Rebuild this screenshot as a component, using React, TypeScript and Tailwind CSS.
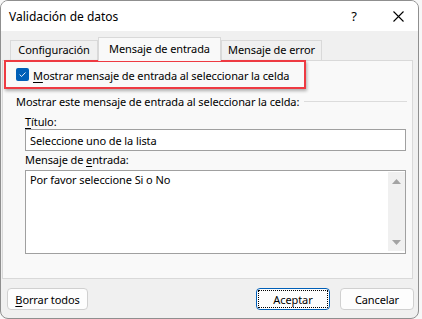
const font = { fontFamily: '"Noto Sans", "Segoe UI", sans-serif' };

function U({ c }: { c: string }) {
  return <span className="underline decoration-1 underline-offset-[2px]">{c}</span>;
}

function Tab({ label, w, active }: { label: string; w: string; active?: boolean }) {
  if (active) {
    return (
      <div
        className={`relative z-10 -mb-px h-[24px] border border-b-0 border-[#d9d9d9] bg-[#f9f9f9] pt-[3px] text-center ${w}`}
      >
        {label}
      </div>
    );
  }
  return (
    <div className={`h-[20px] border border-b-0 border-[#d9d9d9] bg-[#f0f0f0] pt-[1px] text-center ${w}`}>
      {label}
    </div>
  );
}

function Btn({ children, primary, w }: { children: React.ReactNode; primary?: boolean; w: string }) {
  return (
    <div
      className={`relative flex h-[22px] items-center justify-center rounded-[4px] border bg-[#fdfdfd] ${w} ${
        primary ? 'border-[#005fb8]' : 'border-[#d0d0d0]'
      }`}
    >
      {primary && <div className="absolute inset-[1px] border border-dotted border-black" />}
      <span>{children}</span>
    </div>
  );
}

export default function App() {
  return (
    <div
      className="h-[319px] w-[422px] bg-[#f7f7f7] text-[11px] leading-[15px] tracking-[-0.1px] text-black"
      style={font}
    >
      <div className="flex h-[319px] w-[419px] flex-col overflow-hidden rounded-[8px] border border-[#8f8f8f] bg-[#f0f0f0]">
        {/* title bar */}
        <div className="flex h-[30px] shrink-0 items-center bg-white pl-[8px]">
          <span className="text-[12px] tracking-normal">Validación de datos</span>
          <span className="ml-auto mr-[36px] text-[13px] tracking-normal">?</span>
          <svg className="mr-[14px]" width="11" height="11" viewBox="0 0 11 11">
            <path d="M0.5 0.5 L10.5 10.5 M10.5 0.5 L0.5 10.5" stroke="black" strokeWidth="1.1" fill="none" />
          </svg>
        </div>

        {/* tabs */}
        <div className="flex h-[29px] shrink-0 items-end pl-[9px]">
          <Tab label="Configuración" w="w-[88px]" />
          <Tab label="Mensaje de entrada" w="w-[123px]" active />
          <Tab label="Mensaje de error" w="w-[101px]" />
        </div>

        {/* panel */}
        <div className="ml-[1px] flex h-[219px] w-[411px] shrink-0 flex-col border border-[#d9d9d9] bg-[#f9f9f9]">
          <div className="relative ml-[13px] mt-[7px] flex h-[15px] items-start">
            <div className="flex h-[13px] w-[13px] items-center justify-center rounded-[2px] bg-[#005fb8]">
              <svg width="9" height="9" viewBox="0 0 9 9">
                <path d="M1.6 4.6 L3.6 6.5 L7.5 2.5" fill="none" stroke="white" strokeWidth="0.9" />
              </svg>
            </div>
            <span className="ml-[4px]">
              <U c="M" />ostrar mensaje de entrada al seleccionar la celda
            </span>
            <div className="absolute -left-[12px] -top-[8px] h-[29px] w-[302px] border-2 border-[#ee3a42] shadow-[1px_2px_3px_rgba(0,0,0,0.3)]" />
          </div>

          <div className="ml-[13px] mr-[5px] mt-[11px] flex items-center">
            <span>Mostrar este mensaje de entrada al seleccionar la celda:</span>
            <div className="ml-[5px] h-px flex-1 bg-[#dcdcdc]" />
          </div>

          <div className="ml-[22px] mt-[5px] w-[381px]">
            <div>
              <U c="T" />ítulo:
            </div>
            <div className="flex h-[22px] items-center border border-[#a0a0a0] bg-white pl-[4px]">
              Seleccione uno de la lista
            </div>
            <div className="mt-[1px]">
              Mensaje de <U c="e" />ntrada:
            </div>
            <div className="mt-[3px] flex h-[84px] border border-[#a0a0a0] bg-white">
              <div className="flex-1 pl-[4px] pt-[1px]">Por favor seleccione Si o No</div>
              <div className="mb-[2px] mt-[1px] flex w-[17px] flex-col items-center justify-between bg-[#f0f0f0] pb-[6px] pt-[7px]">
                <svg width="9" height="5" viewBox="0 0 9 5">
                  <path d="M0 5 L4.5 0 L9 5 Z" fill="#a3a3a3" />
                </svg>
                <svg width="9" height="5" viewBox="0 0 9 5">
                  <path d="M0 0 L4.5 5 L9 0 Z" fill="#a3a3a3" />
                </svg>
              </div>
            </div>
          </div>
        </div>

        {/* buttons */}
        <div className="ml-[6px] mr-[4px] mt-[9px] flex items-center">
          <Btn w="w-[81px]">
            <U c="B" />orrar todos
          </Btn>
          <div className="ml-auto flex gap-[10px]">
            <Btn primary w="w-[74px]">
              Aceptar
            </Btn>
            <Btn w="w-[74px]">Cancelar</Btn>
          </div>
        </div>
      </div>
    </div>
  );
}
